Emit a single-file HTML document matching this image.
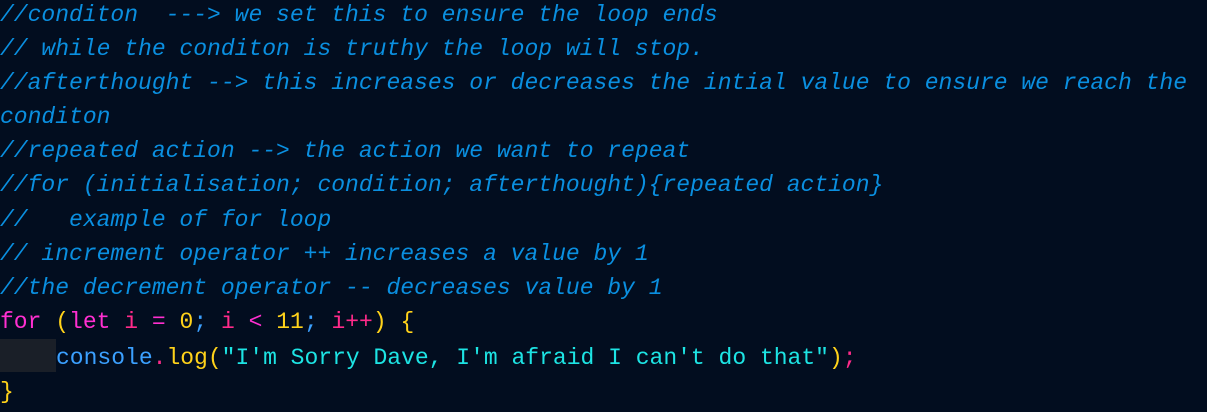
<html><head><style>
body{margin:0;background:#020d1f;width:1207px;height:412px;overflow:hidden}
pre{position:absolute;left:0;top:-2px;margin:0;font-family:"Liberation Mono",monospace;font-size:23px;line-height:34.1px;color:#0a8fe0}
.c{font-style:italic;color:#0a8fe0}
.k{color:#ff2fd0}.y{color:#ffd21a}.v{color:#ff2a8a}.b{color:#3ba0ff}.s{color:#1de4e4}
.ind{display:inline-block;width:56px;height:33px;background:#1a1f28;vertical-align:-8px}
</style></head><body><pre><span class="c">//conditon  ---&gt; we set this to ensure the loop ends
// while the conditon is truthy the loop will stop.
//afterthought --&gt; this increases or decreases the intial value to ensure we reach the
conditon
//repeated action --&gt; the action we want to repeat
//for (initialisation; condition; afterthought){repeated action}
//   example of for loop
// increment operator ++ increases a value by 1
//the decrement operator -- decreases value by 1</span>
<span class="k">for</span> <span class="y">(</span><span class="k">let</span> <span class="v">i</span> <span class="k">=</span> <span class="y">0</span><span class="b">;</span> <span class="v">i</span> <span class="k">&lt;</span> <span class="y">11</span><span class="b">;</span> <span class="v">i++</span><span class="y">)</span> <span class="y">{</span>
<span class="ind"></span><span class="b">console</span><span class="v">.</span><span class="y">log(</span><span class="s">"I'm Sorry Dave, I'm afraid I can't do that"</span><span class="y">)</span><span class="v">;</span>
<span class="y">}</span></pre></body></html>
